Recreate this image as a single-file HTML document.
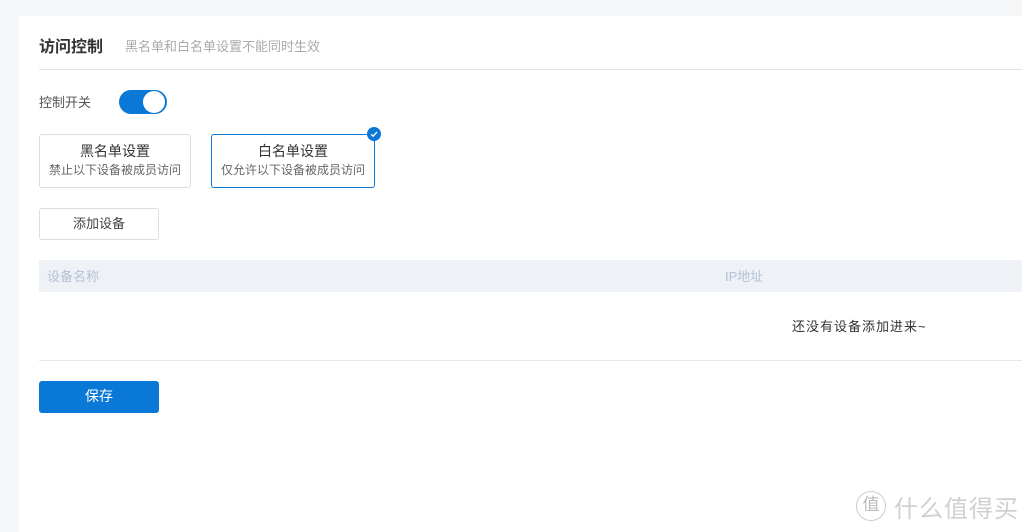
<!DOCTYPE html>
<html><head><meta charset="utf-8"><style>
*{margin:0;padding:0;box-sizing:border-box}
body{width:1022px;height:532px;background:#f5f6f7;font-family:"Liberation Sans","Noto Sans CJK SC",sans-serif;position:relative;overflow:hidden}
.card{position:absolute;left:19px;top:16px;width:1003px;height:516px;background:#fff}
.a{position:absolute;white-space:nowrap}
</style></head><body>
<div class="card"></div>
<div class="a" style="left:39px;top:33px;font-size:16px;color:#333;font-weight:bold">访问控制</div>
<div class="a" style="left:125px;top:36px;font-size:13px;color:#aaa">黑名单和白名单设置不能同时生效</div>
<div class="a" style="left:39px;top:69px;width:983px;height:1px;background:#e2e2e2"></div>
<div class="a" style="left:39px;top:92px;font-size:13px;color:#555">控制开关</div>
<div class="a" style="left:119px;top:90px;width:48px;height:24px;border-radius:12px;background:#0a78d6"></div>
<div class="a" style="left:143px;top:91px;width:22px;height:22px;border-radius:11px;background:#fff"></div>
<div class="a" style="left:39px;top:134px;width:152px;height:54px;border:1px solid #ddd;border-radius:3px;text-align:center">
<div style="font-size:14px;color:#333;margin-top:7px;line-height:18px">黑名单设置</div>
<div style="font-size:12px;color:#666;margin-top:2px;line-height:16px">禁止以下设备被成员访问</div></div>
<div class="a" style="left:211px;top:134px;width:164px;height:54px;border:1px solid #0a78d6;border-radius:3px;text-align:center">
<div style="font-size:14px;color:#333;margin-top:7px;line-height:18px">白名单设置</div>
<div style="font-size:12px;color:#666;margin-top:2px;line-height:16px">仅允许以下设备被成员访问</div></div>
<div class="a" style="left:367px;top:127px;width:14px;height:14px;border-radius:7px;background:#0a78d6">
<svg width="14" height="14" viewBox="0 0 14 14"><path d="M4 7.2 6.1 9.2 10 5" fill="none" stroke="#fff" stroke-width="1.3"/></svg></div>
<div class="a" style="left:39px;top:208px;width:120px;height:32px;border:1px solid #ddd;border-radius:3px;text-align:center;line-height:29px;font-size:13px;color:#444">添加设备</div>
<div class="a" style="left:39px;top:260px;width:983px;height:32px;background:#eef1f6"></div>
<div class="a" style="left:47px;top:266px;font-size:13px;color:#b4c2d3">设备名称</div>
<div class="a" style="left:725px;top:266px;font-size:13px;color:#b4c2d3">IP地址</div>
<div class="a" style="left:792px;top:316px;font-size:13px;color:#333;letter-spacing:1px">还没有设备添加进来~</div>
<div class="a" style="left:39px;top:360px;width:983px;height:1px;background:#e8e8e8"></div>
<div class="a" style="left:39px;top:381px;width:120px;height:32px;background:#0a78d6;border-radius:3px;text-align:center;line-height:31px;font-size:14px;color:#fff">保存</div>
<div class="a" style="left:856px;top:491px;width:30px;height:30px;border:1.5px solid #ccc;border-radius:15px;text-align:center;line-height:26px;font-size:17px;color:#bbb">值</div>
<div class="a" style="left:894px;top:489px;font-size:24px;color:#d0d0d0;letter-spacing:1px">什么值得买</div>
</body></html>
